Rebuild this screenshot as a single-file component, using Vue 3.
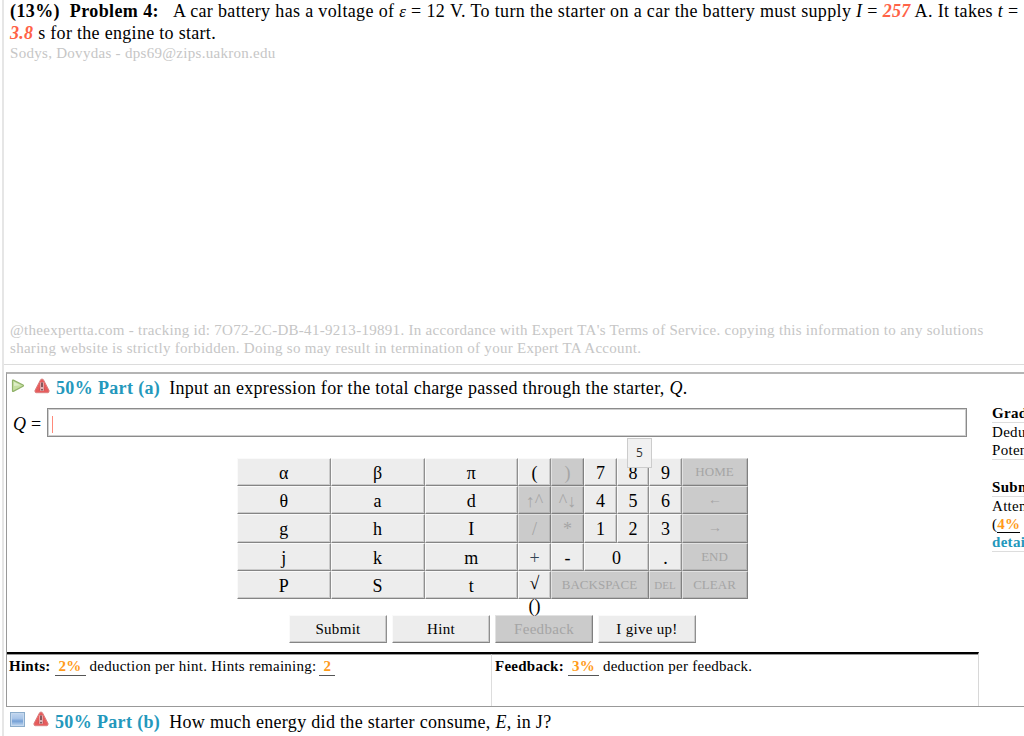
<template>
  <div class="page">
    <section class="problem">
      <div class="statement">
        <p><b class="heading">(13%)&nbsp; Problem 4:</b><span class="body">A car battery has a voltage of <i class="eps">ε</i> = 12 V. To turn the starter on a car the battery must supply <i>I</i> = <b class="value">257</b> A. It takes <i>t</i> =</span></p>
        <p><b class="value">3.8</b> s for the engine to start.</p>
      </div>
      <p class="student">Sodys, Dovydas - dps69@zips.uakron.edu</p>
      <div class="notice">
        <p>@theexpertta.com - tracking id: 7O72-2C-DB-41-9213-19891. In accordance with Expert TA's Terms of Service. copying this information to any solutions</p>
        <p>sharing website is strictly forbidden. Doing so may result in termination of your Expert TA Account.</p>
      </div>
    </section>

    <section class="part">
      <div class="work">
        <div class="part-title">
          <svg class="play" viewBox="0 0 14 14">
            <path d="M1.5 1.5 Q1.5 .8 2.3 1.1 L12 5.9 Q13 6.6 12 7.3 L2.3 12.4 Q1.5 12.7 1.5 12 Z" fill="#c5dfa0" stroke="#91b26a" stroke-width="1.2" />
            <path d="M3 3 L9.5 6.3 L3 7 Z" fill="#deedc7" />
          </svg>
          <svg class="warn" viewBox="0 0 16 16">
            <path d="M6.6 1.7 Q8 .2 9.4 1.7 L15 12.4 Q15.5 14.6 13.7 14.7 H2.3 Q.5 14.6 1 12.4 Z" fill="#e85c5c" stroke="#d98080" />
            <path d="M8 3 L11.4 12.4 H4.6 Z" fill="#c9575a" />
            <path d="M6.4 4.4 H9.6 V12.8 H6.4 Z" fill="#f0d6d6" />
            <path d="M7.2 4.4 H8.8 V9.3 H7.2 Z M7.2 10.8 H8.8 V12.4 H7.2 Z" fill="#6a3a40" />
          </svg>
          <b>50% Part (a)</b>
          <span class="question">Input an expression for the total charge passed through the starter, <i>Q</i>.</span>
        </div>

        <div class="answer">
          <label><i>Q</i> =</label>
          <div class="field"><span class="caret"></span></div>
        </div>

        <div class="keypad">
          <div v-for="key in keys" :key="key.label" :class="['key', key.kind, { off: key.off }]">{{ key.label }}</div>
          <div class="tip">5</div>
        </div>

        <div class="actions">
          <div v-for="action in actions" :key="action.label" :class="['action', { off: action.off }]">{{ action.label }}</div>
        </div>

        <div class="costs">
          <div class="cost hints"><b>Hints:</b><b class="amount">&nbsp;2%&nbsp;</b><span class="desc">deduction per hint. Hints remaining:</span><b class="amount last">&nbsp;2&nbsp;</b></div>
          <div class="cost feedback"><b>Feedback:</b><b class="amount">&nbsp;3%&nbsp;</b><span class="desc">deduction per feedback.</span></div>
        </div>
      </div>

      <aside class="summary">
        <h4>Grade Summary</h4>
        <div class="rows">
          <p>Deductions</p>
          <p>Potential</p>
        </div>
        <h4 class="second">Submissions</h4>
        <div class="rows">
          <p>Attempts</p>
          <p>(<b class="percent">4%</b>&nbsp; per attempt)</p>
          <p><b class="link">detailed view</b></p>
        </div>
      </aside>
    </section>

    <section class="part-title next">
      <svg class="box" viewBox="0 0 15 15">
        <defs>
          <linearGradient id="boxFill" x1="0" y1="0" x2="0" y2="1">
            <stop offset="0" stop-color="#bdd3ee" />
            <stop offset=".4" stop-color="#a9c5e8" />
            <stop offset=".65" stop-color="#74a0d6" />
            <stop offset="1" stop-color="#b5cfec" />
          </linearGradient>
        </defs>
        <rect x=".5" y=".5" width="14" height="14" fill="#c5d8ee" stroke="#8baccb" />
        <rect x="2" y="2" width="11" height="11" fill="url(#boxFill)" />
      </svg>
      <svg class="warn" viewBox="0 0 16 16">
        <path d="M6.6 1.7 Q8 .2 9.4 1.7 L15 12.4 Q15.5 14.6 13.7 14.7 H2.3 Q.5 14.6 1 12.4 Z" fill="#e85c5c" stroke="#d98080" />
        <path d="M8 3 L11.4 12.4 H4.6 Z" fill="#c9575a" />
        <path d="M6.4 4.4 H9.6 V12.8 H6.4 Z" fill="#f0d6d6" />
        <path d="M7.2 4.4 H8.8 V9.3 H7.2 Z M7.2 10.8 H8.8 V12.4 H7.2 Z" fill="#6a3a40" />
      </svg>
      <b>50% Part (b)</b>
      <span class="question">How much energy did the starter consume, <i>E</i>, in J?</span>
    </section>
  </div>
</template>

<script setup>
const keys = [
  { label: 'α' }, { label: 'β' }, { label: 'π' },
  { label: '(' }, { label: ')', off: true },
  { label: '7' }, { label: '8' }, { label: '9' },
  { label: 'HOME', kind: 'word', off: true },

  { label: 'θ' }, { label: 'a' }, { label: 'd' },
  { label: '↑^', off: true }, { label: '^↓', off: true },
  { label: '4' }, { label: '5' }, { label: '6' },
  { label: '←', kind: 'arrow', off: true },

  { label: 'g' }, { label: 'h' }, { label: 'I' },
  { label: '/', off: true }, { label: '*', off: true },
  { label: '1' }, { label: '2' }, { label: '3' },
  { label: '→', kind: 'arrow', off: true },

  { label: 'j' }, { label: 'k' }, { label: 'm' },
  { label: '+', kind: 'plus' }, { label: '-' },
  { label: '0', kind: 'zero' }, { label: '.' },
  { label: 'END', kind: 'word', off: true },

  { label: 'P' }, { label: 'S' }, { label: 't' },
  { label: '√ ()', kind: 'root' },
  { label: 'BACKSPACE', kind: 'word back', off: true },
  { label: 'DEL', kind: 'word del', off: true },
  { label: 'CLEAR', kind: 'word', off: true }
];

const actions = [
  { label: 'Submit' },
  { label: 'Hint' },
  { label: 'Feedback', off: true },
  { label: 'I give up!' }
];
</script>

<style>
body {
  margin: 0;
  background: #fff;
}
</style>

<style scoped>
.page {
  box-sizing: border-box;
  width: 1022px;
  height: 736px;
  margin-left: 2px;
  border-left: 2px solid #e6e6e6;
  overflow: hidden;
  white-space: nowrap;
  color: #000;
  font-family: "Liberation Serif", "Times New Roman", serif;
  font-size: 18px;
  letter-spacing: 0.3px;
}

p,
h4 {
  margin: 0;
}

.problem {
  box-sizing: border-box;
  height: 365px;
  padding-left: 6px;
  border-bottom: 1px solid #dcdcdc;
}

.statement {
  height: 44px;
  line-height: 22px;
}

.heading {
  letter-spacing: 0.4px;
}

.body {
  margin-left: 14px;
  letter-spacing: 0.35px;
}

.eps {
  font-size: 17px;
  line-height: 1;
}

.value {
  color: #ff6347;
  font-style: italic;
}

.student,
.notice {
  color: #c6c6c6;
  font-size: 15px;
  line-height: 18px;
  letter-spacing: 0.29px;
}

.notice {
  margin-top: 259px;
}

.part {
  box-sizing: border-box;
  display: flex;
  height: 335px;
  margin: 7px 0 0 2px;
  border: solid #999;
  border-width: 2px 0 1px 1px;
  border-top-color: #b4b4b4;
}

.work {
  width: 972px;
  flex: none;
}

.part-title {
  display: flex;
  align-items: center;
  height: 29px;
}

.part-title b {
  color: #2498bc;
  letter-spacing: 0.35px;
}

.play {
  width: 14px;
  height: 14px;
  margin: -6px 9px 0 4px;
}

.warn {
  width: 16px;
  height: 16px;
  margin: -6px 6px 0 0;
}

.question {
  margin-left: 9px;
  letter-spacing: 0.31px;
}

.answer {
  display: flex;
  align-items: center;
  height: 29px;
  margin-top: 5px;
}

.answer label {
  width: 34px;
  padding: 3px 0 0 6px;
}

.field {
  box-sizing: border-box;
  width: 920px;
  height: 29px;
  padding: 7px 4px;
  border: 1px solid #8b8b8b;
  box-shadow: inset 0 0 0 1px #cfcfcf;
}

.caret {
  display: block;
  width: 1px;
  height: 17px;
  background: #ff8a7a;
}

.keypad {
  position: relative;
  display: grid;
  grid-template-columns: 93.5px 94px 93.5px 33px 33px 33px 32px 33px 66px;
  grid-template-rows: repeat(5, 28.2px);
  width: 511px;
  margin: 21px 0 0 230px;
}

.key,
.action {
  box-sizing: border-box;
  border: 1px solid;
  border-color: #fafafa #8f8f8f #858585 #fafafa;
  box-shadow: inset -1px -1px #cacaca;
  background: #ededed;
  text-align: center;
}

.key {
  line-height: 28px;
  letter-spacing: 0;
}

.key.off,
.action.off {
  border-color: #e2e2e2 #808080 #808080 #e2e2e2;
  box-shadow: inset -1px -1px #b5b5b5;
  background: #cbcbcb;
  color: #a5a5a5;
}

.word {
  padding-right: 1px;
  font-size: 13px;
  line-height: 26px;
}

.arrow {
  font-size: 14px;
  line-height: 26px;
}

.plus {
  color: #345;
}

.zero {
  grid-column: span 2;
}

.back {
  grid-column: span 3;
}

.del {
  font-size: 11px;
}

.root {
  padding: 0 4px;
  white-space: normal;
  line-height: 23px;
}

.tip {
  position: absolute;
  left: 390px;
  top: -20px;
  box-sizing: border-box;
  width: 25px;
  height: 30px;
  border: 1px solid #ccc;
  background: #f1f1f1;
  color: #333;
  font: 12px/28px "Open Sans", sans-serif;
  text-align: center;
}

.actions {
  display: flex;
  gap: 5px;
  margin: 16px 0 0 282px;
}

.action {
  width: 98px;
  height: 28px;
  font-size: 15px;
  line-height: 27px;
}

.costs {
  box-sizing: border-box;
  display: flex;
  height: 54px;
  margin-top: 9px;
  border-top: 2px solid #000;
  border-right: 1px solid #d8d8d8;
}

.cost {
  box-sizing: border-box;
  display: flex;
  align-items: flex-start;
  padding: 2px 0 0 2px;
  border-top: 1px solid #999;
  font-size: 15px;
  line-height: 18px;
  letter-spacing: 0.25px;
}

.hints {
  width: 485px;
  border-right: 1px solid #ddd;
}

.feedback {
  width: 486px;
  padding-left: 3px;
}

.amount {
  margin: 0 4px;
  border-bottom: 1px solid #555;
  color: #ff9b1a;
}

.last {
  margin-left: 3px;
}

.summary {
  margin: 30px 0 0 13px;
  font-size: 15px;
  line-height: 18px;
}

.summary h4 {
  height: 18px;
  border-bottom: 1px solid #ddd;
  font-size: 15px;
}

.rows {
  border-bottom: 1px solid #ddd;
}

.summary .second {
  margin-top: 18px;
}

.percent {
  border-bottom: 1px solid #000;
  color: #ff9b1a;
}

.link {
  color: #2498bc;
}

.next {
  height: 30px;
  margin-left: 2px;
}

.box {
  width: 15px;
  height: 15px;
  margin: -6px 8px 0 4px;
}
</style>
